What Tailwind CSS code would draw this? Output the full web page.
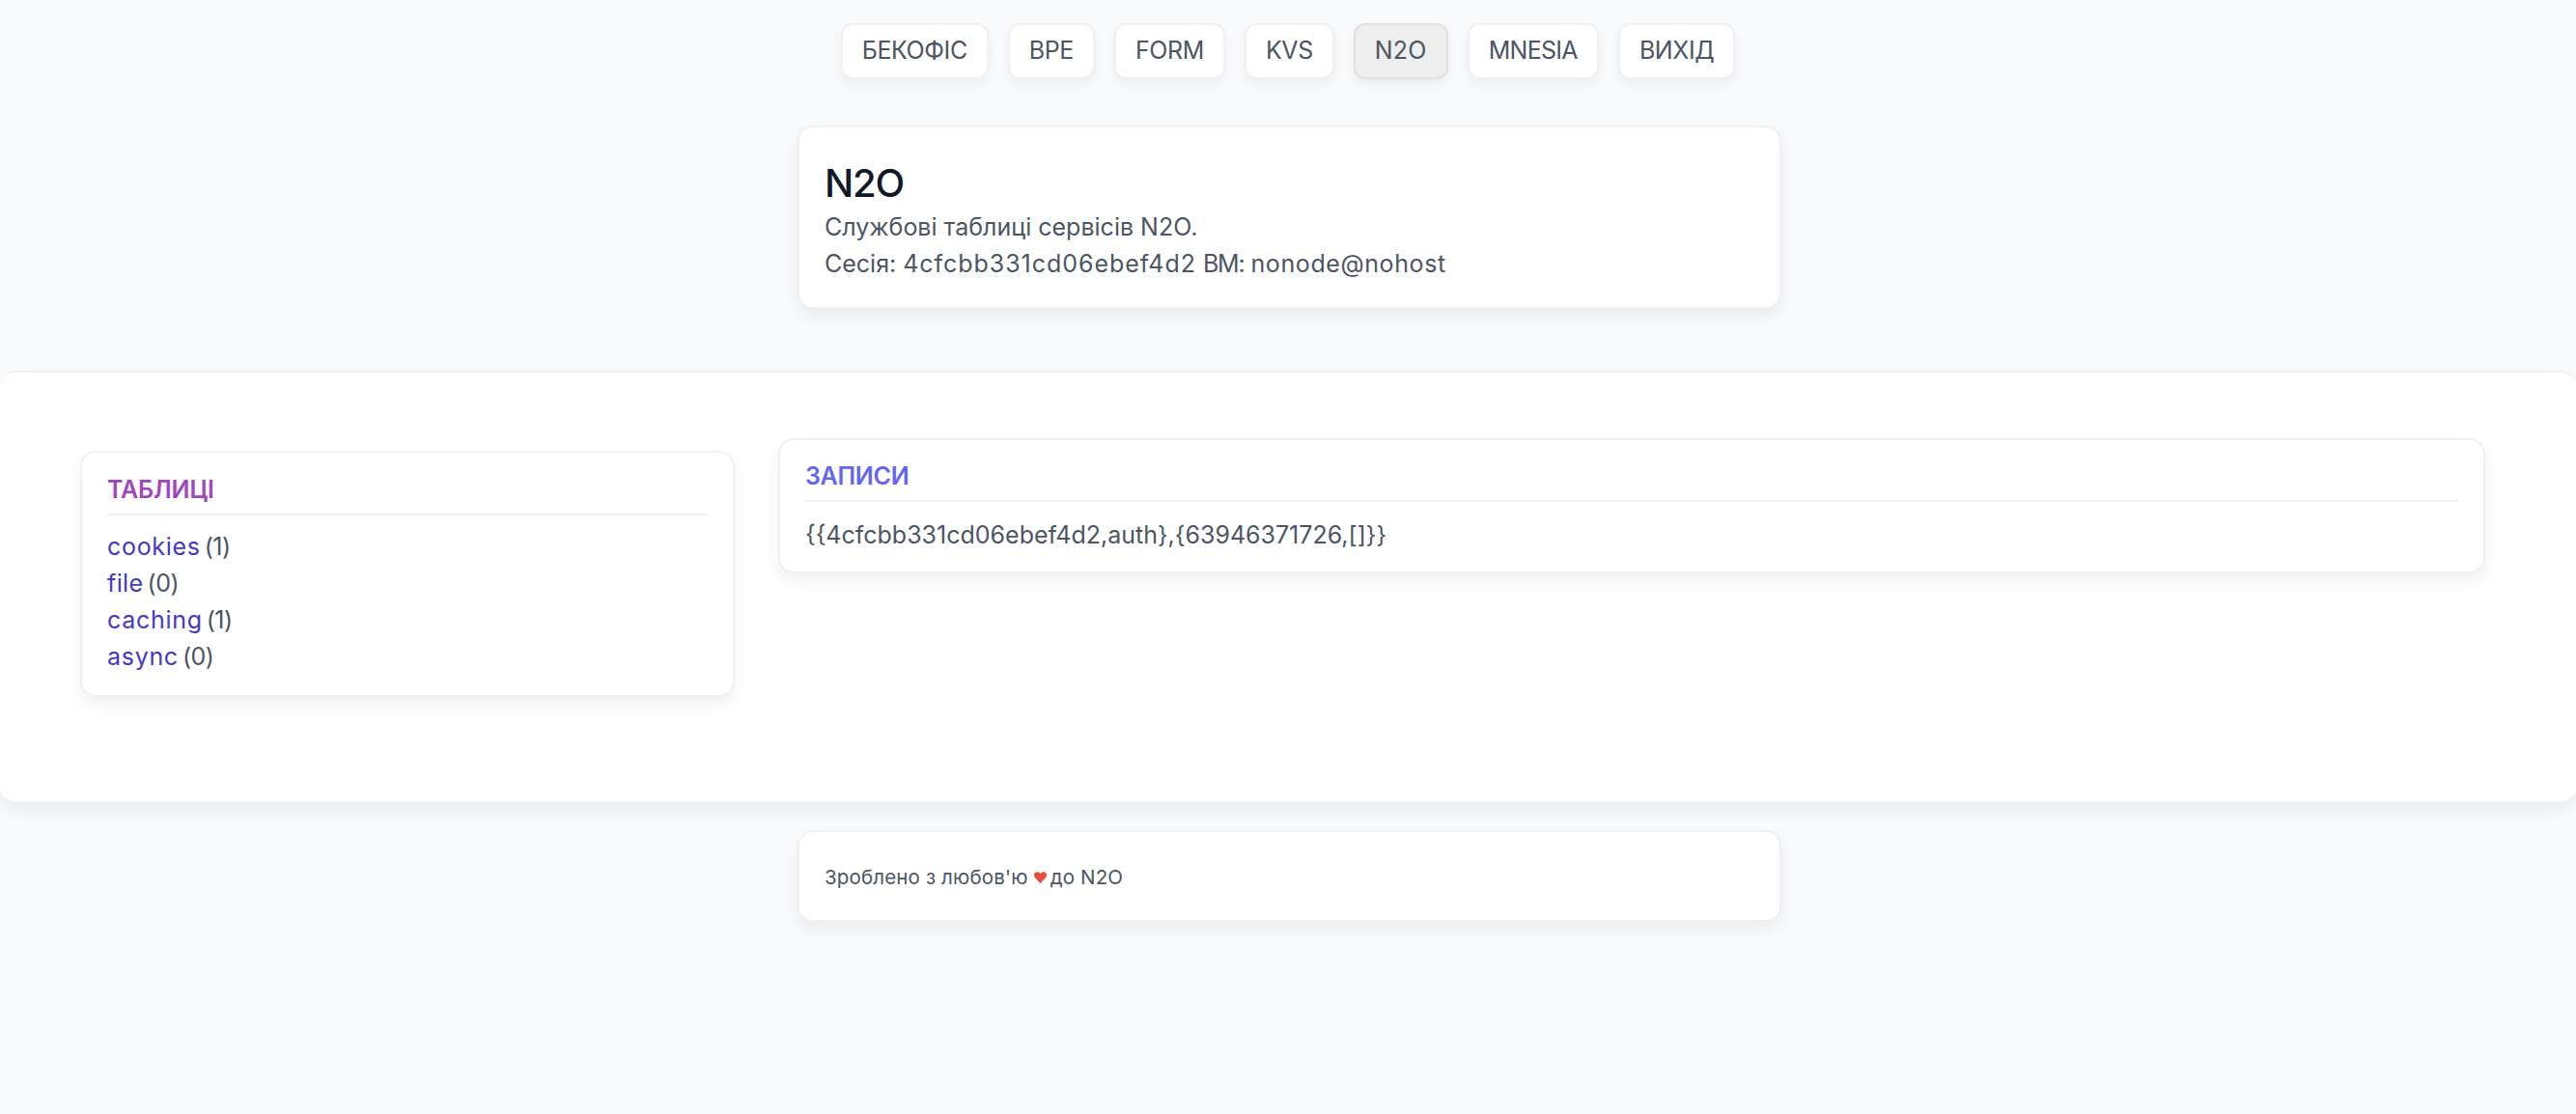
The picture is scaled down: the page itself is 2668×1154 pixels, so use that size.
<!DOCTYPE html>
<html lang="uk">

<head>
    <meta charset="UTF-8">
    <meta name="viewport" content="width=device-width, initial-scale=1.0">
    <title>N2O</title>
    <script src="https://cdn.jsdelivr.net/npm/@tailwindcss/browser@4"></script>
</head>

<body class="min-h-screen bg-[#f9fafb] font-['Inter',sans-serif] text-[25px] leading-[37.5px] text-[#4b5563]">

    <!-- Menu -->
    <nav class="flex justify-center gap-[20px] pt-[24px] tracking-[-0.4px]">
        <a class="flex h-[58px] items-center rounded-[12px] border-2 border-[#eff0f1] bg-white px-[20px] shadow-[0_6px_12px_rgba(0,0,0,0.05)]">БЕКОФІС</a>
        <a class="flex h-[58px] items-center rounded-[12px] border-2 border-[#eff0f1] bg-white px-[20px] shadow-[0_6px_12px_rgba(0,0,0,0.05)]">BPE</a>
        <a class="flex h-[58px] items-center rounded-[12px] border-2 border-[#eff0f1] bg-white px-[20px] shadow-[0_6px_12px_rgba(0,0,0,0.05)]">FORM</a>
        <a class="flex h-[58px] items-center rounded-[12px] border-2 border-[#eff0f1] bg-white px-[20px] shadow-[0_6px_12px_rgba(0,0,0,0.05)]">KVS</a>
        <a class="flex h-[58px] items-center rounded-[12px] border-2 border-[#e0e0e0] bg-[#eeeeee] px-[20px] tracking-[0.2px] shadow-[0_6px_12px_rgba(0,0,0,0.05)]">N2O</a>
        <a class="flex h-[58px] items-center rounded-[12px] border-2 border-[#eff0f1] bg-white px-[20px] tracking-[-0.7px] shadow-[0_6px_12px_rgba(0,0,0,0.05)]">MNESIA</a>
        <a class="flex h-[58px] items-center rounded-[12px] border-2 border-[#eff0f1] bg-white px-[20px] shadow-[0_6px_12px_rgba(0,0,0,0.05)]">ВИХІД</a>
    </nav>

    <!-- Header -->
    <header class="mt-[48px] ml-[826px] w-[1019px] rounded-[16px] border-2 border-[#eff0f1] bg-white px-[26px] pt-[34px] pb-[26px] shadow-[0_8px_16px_rgba(0,0,0,0.06)]">
        <h1 class="text-[40px] leading-[48px] font-medium tracking-[-1.2px] text-[#111827]">N2O</h1>
        <p class="mt-[3px]">Службові таблиці сервісів N2O.</p>
        <p>Сесія: <span class="tracking-[0.95px]">4cfcbb331cd06ebef4d2</span> <span class="tracking-[-1.2px]">ВМ:</span> <span class="tracking-[0.6px]">nonode@nohost</span></p>
    </header>

    <!-- Panel -->
    <main class="mt-[64px] flex h-[448px] items-start gap-[45px] rounded-[16px] border-x-0 border-y-2 border-[#eff0f1] bg-white pt-[68px] pr-[94px] pl-[83px] shadow-[0_8px_16px_rgba(0,0,0,0.06)]">
        <section class="mt-[13px] w-[678px] shrink-0 rounded-[16px] border-2 border-[#eff0f1] bg-white px-[26px] pt-[19px] pb-[21px] shadow-[0_8px_16px_rgba(0,0,0,0.06)]">
            <h2 class="border-b-2 border-[#eff0f1] pb-[6px] text-[25px] leading-[38px] font-semibold tracking-[-0.2px] text-[#a044c0]">ТАБЛИЦІ</h2>
            <ul class="mt-[13px] leading-[38px]">
                <li><a class="tracking-[0.7px] text-[#4338ca]">cookies</a> <span class="ml-[-3px] tracking-[-0.5px]">(1)</span></li>
                <li><a class="tracking-[0.4px] text-[#4338ca]">file</a> <span class="ml-[-3px] tracking-[-0.5px]">(0)</span></li>
                <li><a class="tracking-[0.7px] text-[#4338ca]">caching</a> <span class="ml-[-3px] tracking-[-0.5px]">(1)</span></li>
                <li><a class="tracking-[0.7px] text-[#4338ca]">async</a> <span class="ml-[-3px] tracking-[-0.5px]">(0)</span></li>
            </ul>
        </section>
        <section class="min-w-0 flex-1 rounded-[16px] border-2 border-[#eff0f1] bg-white px-[26px] pt-[18px] pb-[19px] shadow-[0_8px_16px_rgba(0,0,0,0.06)]">
            <h2 class="border-b-2 border-[#eff0f1] pb-[6px] text-[25px] leading-[38px] font-semibold tracking-[-0.3px] text-[#6366f1]">ЗАПИСИ</h2>
            <p class="mt-[15px] leading-[38px]">{{4cfcbb331cd06ebef4d2,auth},{63946371726,[]}}</p>
        </section>
    </main>

    <!-- Footer -->
    <footer class="mt-[28px] ml-[826px] flex h-[95px] w-[1019px] items-center rounded-[16px] border-2 border-[#eff0f1] bg-white px-[26px] pt-[2px] text-[20.5px] tracking-[0.15px] shadow-[0_8px_16px_rgba(0,0,0,0.06)]">
        Зроблено з любов'ю
        <svg class="mr-[4px] ml-[6px] h-[12px] w-[13px]" viewBox="0 0 24 22" fill="#e74c3c"><path d="M12 22 2 11.500C-1 8-.5 3.500 2.500 1.500 5.500-.5 9.500.5 12 4c2.500-3.500 6.500-4.500 9.500-2.500s3.500 6.500.5 10z"/></svg>
        до N2O
    </footer>

</body>

</html>
